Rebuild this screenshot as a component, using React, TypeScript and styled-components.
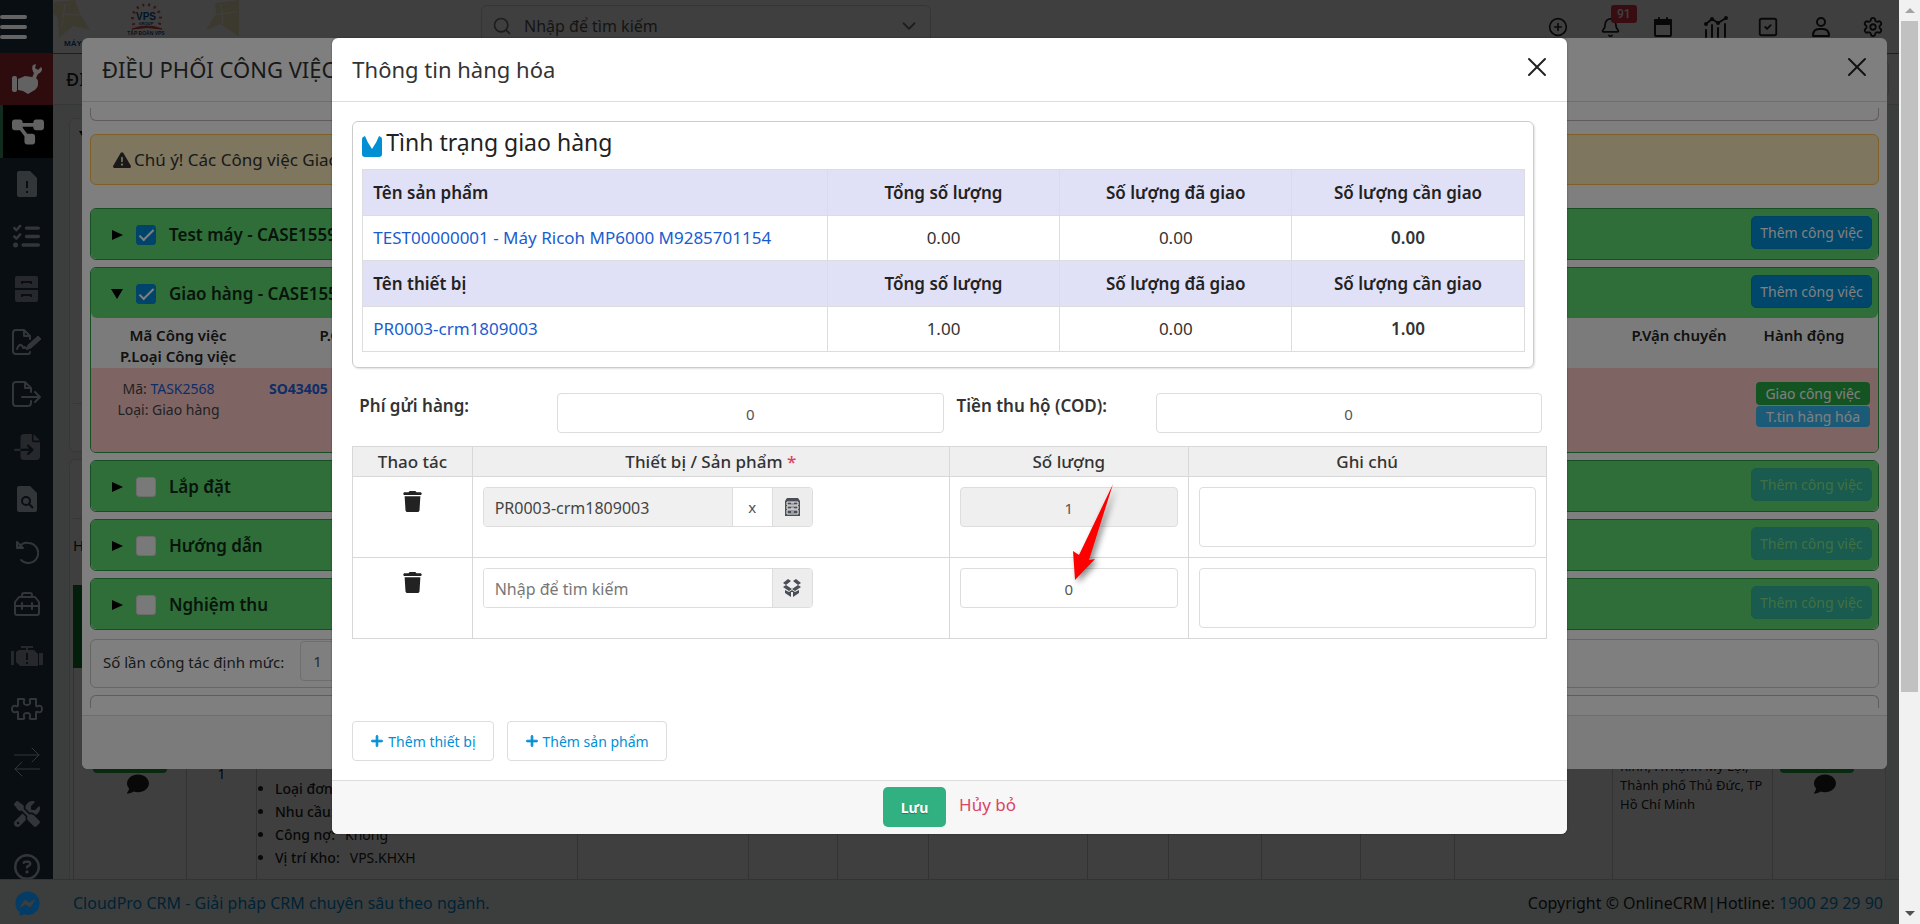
import React from 'react';
import styled, { createGlobalStyle, css } from 'styled-components';
import {
  FaDiagramProject,
  FaListCheck,
  FaFileImport,
  FaScrewdriverWrench,
  FaRegCircleQuestion,
  FaTriangleExclamation,
  FaComment,
  FaTrash,
  FaPlus,
  FaFacebookMessenger,
} from 'react-icons/fa6';
import { CirclePlus, Bell, SquareCheck, Settings, Search, ChevronDown, X } from 'lucide-react';

const GlobalStyle = createGlobalStyle`
  *, *::before, *::after { box-sizing: border-box; }
  html, body { margin: 0; height: 100%; }
  body {
    font-family: 'Noto Sans', 'Open Sans', sans-serif;
    font-size: 15px;
    line-height: 22px;
    color: #222;
    background: #fff;
    overflow: hidden;
  }
  button, input, textarea { font-family: inherit; font-size: inherit; color: inherit; margin: 0; }
  button { cursor: pointer; }
  a { color: #1a5ccf; text-decoration: none; }
  h1, h2, h3, p, ul { margin: 0; padding: 0; font-weight: 400; }
`;

/* ---------- window ---------- */

const Window = styled.div`
  display: flex;
  height: 100vh;
`;

const Stage = styled.div`
  position: relative;
  flex: 1;
  min-width: 0;
  overflow: hidden;
`;

const ScrollTrack = styled.div`
  display: flex;
  flex-direction: column;
  align-items: center;
  width: 21px;
  background: #f1f1f1;
`;

const ScrollThumb = styled.div`
  width: 17px;
  flex: 671 1 0;
  background: #c1c1c1;
`;

const ScrollRest = styled.div`
  flex: 211 1 0;
`;

const ScrollArrow = styled.div<{ $down?: boolean }>`
  display: flex;
  align-items: center;
  justify-content: center;
  height: 21px;
  &::before {
    content: '';
    border: 5px solid transparent;
    ${(p) =>
      p.$down
        ? css`border-top-color: #505050; border-bottom-width: 0;`
        : css`border-bottom-color: #a3a3a3; border-top-width: 0;`}
  }
`;

const Backdrop = styled.div<{ $level: number }>`
  position: absolute;
  inset: 0;
  z-index: ${(p) => p.$level};
  background: rgba(0, 0, 0, 0.5);
`;

/* ---------- page shell ---------- */

const Page = styled.div`
  display: grid;
  grid-template: minmax(0, 1fr) 45px / 53px minmax(0, 1fr);
  height: 100%;
  background: #f2faf7;
`;

const Sidebar = styled.nav`
  position: relative;
  z-index: 2;
  overflow: hidden;
  background: #131c27;
  min-height: 0;
`;

const MenuToggle = styled.button`
  display: flex;
  flex-direction: column;
  justify-content: center;
  gap: 6px;
  width: 53px;
  height: 53px;
  padding: 0;
  border: 0;
  background: transparent;
  span { width: 27px; height: 4px; border-radius: 2px; background: #c8c8c8; }
`;

const SideItem = styled.button<{ $tone?: 'red' | 'active'; $faint?: boolean }>`
  display: flex;
  align-items: center;
  justify-content: center;
  width: 53px;
  height: 52px;
  padding: 0;
  border: 0;
  color: ${(p) => (p.$tone ? '#c4c4c4' : p.$faint ? '#4c5157' : '#676c71')};
  background: ${(p) => (p.$tone === 'red' ? '#5c181b' : p.$tone === 'active' ? '#000' : 'transparent')};
  border-left: ${(p) => (p.$tone === 'active' ? '3px solid #22593f' : '0')};
  &:nth-of-type(odd) { height: 53px; }
`;

const Main = styled.div`
  display: flex;
  flex-direction: column;
  min-width: 0;
  min-height: 0;
  overflow: hidden;
`;

const TopBar = styled.header`
  display: flex;
  justify-content: space-between;
  height: 54px;
  flex: none;
  background: #fff;
  border-bottom: 1px solid #1fa57c;
`;

const SearchBox = styled.div`
  display: flex;
  align-items: center;
  gap: 12px;
  width: 450px;
  height: 42px;
  margin: 5px auto 0 240px;
  padding: 0 10px;
  border: 1px solid #d5d5d5;
  border-radius: 6px;
  color: #777;
  input {
    flex: 1;
    min-width: 0;
    border: 0;
    outline: 0;
    padding: 0;
    background: transparent;
    font-size: 16px;
  }
  input::placeholder { color: #555; opacity: 1; }
`;

const Tools = styled.div`
  display: flex;
  padding: 5px 0 0;
`;

const Tool = styled.button`
  position: relative;
  display: flex;
  align-items: center;
  justify-content: center;
  width: 52px;
  height: 44px;
  padding: 0;
  border: 0;
  color: #222;
  background: transparent;
  &:nth-child(even) { width: 53px; }
`;

const Badge = styled.span`
  position: absolute;
  left: 27px;
  top: 0;
  padding: 0 6px;
  border-radius: 3px;
  background: #dc3545;
  color: #fff;
  font: 500 12px/18px Roboto, sans-serif;
`;

const CrumbBar = styled.div`
  display: flex;
  align-items: center;
  justify-content: space-between;
  height: 51px;
  flex: none;
  padding: 0 10px 0 13px;
  background: #fff;
  border-bottom: 1px solid #ddd;
  h1 { font-size: 18px; font-weight: 500; color: #222; }
`;

const CrumbAction = styled.button`
  width: 120px;
  height: 38px;
  border: 1px solid #ddd;
  border-radius: 6px;
  background: #fff;
`;

const FilterCard = styled.section`
  display: flex;
  flex-direction: column;
  justify-content: space-between;
  flex: none;
  height: 334px;
  margin: 13px 13px 0 16px;
  padding: 11px 8px 47px 3px;
  border: 1px solid #ddd;
  border-radius: 6px;
  background: #fff;
  hr { width: 100%; margin: 0; border: 0; border-top: 1px solid #ddd; }
  button { margin-left: 6px; }
`;

const ListCard = styled.section`
  display: flex;
  flex-direction: column;
  flex: 1;
  margin: 7px 13px 0 16px;
  padding: 58px 0 0 3px;
  border: 1px solid #ddd;
  border-bottom: 0;
  border-radius: 6px 6px 0 0;
  background: #fff;
`;

const ListCaption = styled.p`
  padding: 15px 0 29px;
  border-top: 1px solid #ddd;
`;

const ListHead = styled.div`
  height: 83px;
  background: #0c7a28;
`;

const ListRow = styled.div`
  display: grid;
  grid-template-columns: 113px 70px 321px 171px 89px 91px 159px 81px 93px 99px 94px minmax(0, 1fr) 160px 113px;
  height: 211px;
  flex: none;
`;

const ListCell = styled.div`
  border-left: 1px solid #ccc;
  padding: 91px 7px 0;
  font-size: 14px;
  line-height: 19px;
`;

const AddressCell = styled(ListCell)`
  padding: 89px 0 0 7px;
  font-size: 13px;
`;

const CellActions = styled(ListCell)<{ $inset: number }>`
  display: flex;
  flex-direction: column;
  align-items: flex-start;
  padding: 81px 0 0 ${(p) => p.$inset}px;
  svg { margin-left: 34px; }
`;

const CellButton = styled.button`
  width: 74px;
  height: 24px;
  flex: none;
  border: 0;
  border-radius: 4px;
  background: #28a745;
`;

const CellNumber = styled(ListCell)`
  padding-top: 96px;
  text-align: center;
`;

const InfoList = styled.ul`
  padding: 20px 0 0 11px;
  list-style-position: outside;
  li { padding-bottom: 4px; white-space: nowrap; font-weight: 500; }
  span { font-weight: 400; padding-left: 10px; }
`;

const Footer = styled.footer`
  grid-column: 1 / -1;
  display: flex;
  align-items: center;
  gap: 33px;
  padding: 2px 16px 0 15px;
  border-top: 1px solid #ccc;
  background: #f2faf7;
  font-size: 16px;
  a { color: #0089d0; }
  p { margin-left: auto; }
`;

const Messenger = styled.button`
  position: relative;
  z-index: 2;
  display: flex;
  padding: 0;
  border: 0;
  background: transparent;
  color: #0878cc;
`;

/* ---------- dialogs ---------- */

const Dialog = styled.section`
  display: flex;
  flex-direction: column;
  border-radius: 6px;
  background: #fff;
  overflow: hidden;
`;

const BackDialog = styled(Dialog)`
  position: absolute;
  z-index: 3;
  top: 38px;
  left: 82px;
  right: 12px;
`;

const FrontLayer = styled.div`
  position: absolute;
  z-index: 5;
  inset: 38px 0 0;
  display: flex;
  align-items: flex-start;
  justify-content: center;
`;

const FrontDialog = styled(Dialog)`
  width: 65%;
  box-shadow: 0 0 2px rgba(0, 0, 0, 0.4);
`;

const DialogHead = styled.header`
  display: flex;
  align-items: center;
  justify-content: space-between;
  height: 64px;
  padding: 0 14px 0 20px;
  border-bottom: 1px solid #ddd;
  h2 { padding-bottom: 2px; font-size: 22px; line-height: 30px; color: #333; }
`;

const CloseButton = styled.button`
  display: flex;
  padding: 0 0 6px;
  border: 0;
  background: transparent;
  color: #222;
`;

const DialogFoot = styled.footer`
  display: flex;
  align-items: flex-start;
  justify-content: center;
  gap: 13px;
  height: 54px;
  padding-top: 6px;
  border-top: 1px solid #ddd;
  background: #f7f7f7;
`;

/* ---------- task dialog ---------- */

const TaskBody = styled.div`
  display: flex;
  flex-direction: column;
  gap: 7px;
  margin: 6px 8px 7px;
  overflow: hidden;
`;

const ClippedBox = styled.div<{ $edge: 'top' | 'bottom' }>`
  height: 13px;
  border: 1px solid #c8b4bc;
  ${(p) =>
    p.$edge === 'top'
      ? css`border-top: 0; border-radius: 0 0 6px 6px; margin-bottom: 6px;`
      : css`border-bottom: 0; border-radius: 6px 6px 0 0;`}
`;

const Alert = styled.p`
  display: flex;
  align-items: center;
  gap: 3px;
  height: 51px;
  margin-bottom: 16px;
  padding: 0 22px;
  border: 1px solid #ffc04d;
  border-radius: 6px;
  background: #fcecbc;
  color: #333;
  font-size: 17px;
`;

const StepCard = styled.section`
  border: 1px solid #2e9c45;
  border-radius: 6px;
  background: #f6f6f6;
  overflow: hidden;
`;

const StepHead = styled.div`
  display: flex;
  align-items: center;
  height: 50px;
  padding: 2px 6px 0 20px;
  border-radius: 0 0 6px 6px;
  background: #5edd70;
`;

const Toggle = styled.button<{ $open?: boolean }>`
  display: flex;
  align-items: center;
  justify-content: center;
  width: 12px;
  height: 12px;
  margin-right: 13px;
  padding: 0;
  border: 0;
  background: transparent;
  &::before {
    content: '';
    ${(p) =>
      p.$open
        ? css`border: 6px solid transparent; border-top: 10px solid #000; border-bottom: 0;`
        : css`border: 5px solid transparent; border-left: 11px solid #000; border-right: 0;`}
  }
`;

const StepLabel = styled.label`
  display: flex;
  align-items: center;
  gap: 13px;
  font-size: 17px;
  font-weight: 600;
  color: #112b16;
  white-space: nowrap;
`;

const Check = styled.input`
  appearance: none;
  display: flex;
  align-items: center;
  justify-content: center;
  width: 20px;
  height: 20px;
  border: 1px solid #d8d8d8;
  border-radius: 3px;
  background: #f2f2f2;
  &:checked { background: #0089d8; border-color: #0089d8; }
  &:checked::after {
    content: '';
    width: 7px;
    height: 15px;
    margin-top: -4px;
    border: solid #fff;
    border-width: 0 2px 2px 0;
    transform: rotate(45deg);
  }
`;

const AddTask = styled.button`
  width: 121px;
  height: 33px;
  margin: 0 0 6px auto;
  padding: 0;
  border: 1px solid #0086cc;
  border-radius: 5px;
  background: #008ed6;
  color: #fff;
  font-size: 14px;
  &:disabled { opacity: 0.45; color: #b4e0a0; }
`;

const TaskTable = styled.table`
  width: 100%;
  table-layout: fixed;
  border-collapse: collapse;
  text-align: center;
  th { height: 50px; padding: 7px 0 0; vertical-align: top; font-size: 15px; line-height: 21px; font-weight: 600; }
  td { height: 84px; padding: 10px 0 0; vertical-align: top; background: #ffc8c8; color: #444; font-size: 14px; line-height: 21px; }
  td:first-child { padding-right: 19px; }
  td:nth-child(2) { padding-left: 4px; text-align: left; }
`;

const TaskButton = styled.button<{ $blue?: boolean }>`
  display: block;
  width: 114px;
  height: ${(p) => (p.$blue ? 21 : 23)}px;
  margin: 0 auto 1px;
  padding: 0;
  border: 0;
  border-radius: 4px;
  background: ${(p) => (p.$blue ? '#38b6ee' : '#28a745')};
  color: #fff;
  font-size: 14px;
  line-height: 20px;
`;

const TaskActions = styled.div`
  padding: 4px 0 0 18px;
`;

const QuotaBox = styled.div`
  display: flex;
  align-items: flex-start;
  gap: 16px;
  height: 49px;
  margin-top: 2px;
  padding: 1px 12px;
  border: 1px solid #ccc;
  border-radius: 6px;
  color: #333;
  label { line-height: 42px; }
  input { width: 90px; height: 40px; padding: 0 12px; border: 1px solid #ddd; border-radius: 4px; background: #fff; color: #555; }
`;

/* ---------- goods dialog ---------- */

const GoodsBody = styled.div`
  display: flex;
  flex-direction: column;
  padding: 19px 20px;
`;

const StatusCard = styled.section`
  margin-right: 13px;
  padding: 5px 8px 15px 9px;
  border: 1px solid #ccc;
  border-radius: 6px;
  box-shadow: 1px 1px 2px rgba(0, 0, 0, 0.12);
`;

const StatusTitle = styled.h3`
  display: flex;
  align-items: center;
  gap: 4px;
  height: 30px;
  margin-bottom: 12px;
  font-size: 23px;
  line-height: 30px;
  color: #222;
  svg { margin-top: 8px; }
`;

const StatusTable = styled.table`
  width: 100%;
  table-layout: fixed;
  border-collapse: collapse;
  font-size: 17px;
  th, td { border: 1px solid #ddd; padding: 0 10px; text-align: center; }
  th { height: 46px; background: #e0e0f6; font-weight: 600; }
  td { height: 45px; color: #333; }
  th:first-child, td:first-child { text-align: left; }
  td:last-child { font-weight: 600; }
  th:first-child { width: 40%; }
`;

const FeeRow = styled.div`
  display: grid;
  grid-template-columns: 198px minmax(0, 1fr) 212px minmax(0, 1fr);
  margin: 25px 5px 13px 7px;
  label { padding-top: 2px; font-size: 17px; font-weight: 600; color: #333; }
  label + input + label { padding-left: 13px; }
`;

const Field = styled.input<{ $muted?: boolean }>`
  width: 100%;
  height: 40px;
  padding: 2px 10px 0;
  border: 1px solid #ddd;
  border-radius: 4px;
  background: ${(p) => (p.$muted ? '#efefef' : '#fff')};
  color: #555;
  font-size: 15px;
  text-align: center;
`;

const NoteField = styled.textarea`
  display: block;
  width: 100%;
  height: 60px;
  border: 1px solid #ddd;
  border-radius: 4px;
  resize: none;
`;

const GoodsTable = styled.table`
  width: 100%;
  table-layout: fixed;
  border-collapse: collapse;
  th, td { border: 1px solid #d8d8d8; }
  th { height: 30px; padding: 0; background: #efefef; font-size: 17px; font-weight: 500; color: #333; }
  td { height: 81px; padding: 10px; vertical-align: top; }
  td:first-child { text-align: center; }
  em { color: #e0405f; font-style: normal; }
`;

const TrashButton = styled.button`
  padding: 4px 0;
  border: 0;
  background: transparent;
  color: #222;
`;

const Picker = styled.div`
  display: flex;
  width: 330px;
  height: 40px;
  border: 1px solid #ddd;
  border-radius: 4px;
  overflow: hidden;
  input { flex: 1; min-width: 0; padding: 2px 11px 0; border: 0; outline: 0; font-size: 16px; color: #444; background: #fff; }
  input:read-only { background: #f0f0f0; }
  input::placeholder { color: #777; opacity: 1; }
`;

const PickerButton = styled.button<{ $plain?: boolean }>`
  display: flex;
  align-items: center;
  justify-content: center;
  width: 40px;
  padding: 0;
  border: 0;
  border-left: 1px solid #ddd;
  background: ${(p) => (p.$plain ? '#fff' : '#ededed')};
  color: #4a4f57;
`;

const QuantityCell = styled.td`
  position: relative;
`;

const Pointer = styled.svg`
  position: absolute;
  z-index: 1;
  left: 116px;
  top: 4px;
  filter: drop-shadow(3px 3px 3px rgba(0, 0, 0, 0.45));
  pointer-events: none;
`;

const AddRow = styled.div`
  display: flex;
  gap: 13px;
  margin-top: 82px;
`;

const AddButton = styled.button`
  display: flex;
  align-items: center;
  gap: 4px;
  height: 40px;
  padding: 0 17px;
  border: 1px solid #ddd;
  border-radius: 4px;
  background: #fff;
  color: #008fd6;
  font-size: 14px;
  svg { stroke: currentColor; stroke-width: 30px; }
`;

const SaveButton = styled.button`
  width: 63px;
  height: 40px;
  padding: 0;
  border: 0;
  border-radius: 5px;
  background: #31b082;
  color: #fff;
  font-size: 14px;
  font-weight: 700;
  text-shadow: 0 1px 1px rgba(0, 0, 0, 0.3);
`;

const CancelLink = styled.a`
  padding-top: 7px;
  color: #dc4462;
  font-size: 17px;
`;

/* ---------- drawings ---------- */

const outline = { fill: 'none', stroke: 'currentColor', strokeWidth: 2, strokeLinecap: 'round', strokeLinejoin: 'round' } as const;

const HandWrench = () => (
  <svg width="32" height="32" viewBox="0 0 32 32" fill="currentColor">
    <rect x="1" y="13" width="5" height="16" rx="2" />
    <path d="M7 16 14 13 21 14Q26 14 27 18L27 22Q26 26 22 28L17 31 12 28 7 27Z" />
    <path d="M21 15 23 10Q20 6 22 2L25 1 24 5 27 7 30 4Q33 8 27 11L25 15Z" />
  </svg>
);

const FileAlert = () => (
  <svg width="20" height="26" viewBox="0 0 20 26">
    <path d="M2 0H13L20 7V24Q20 26 18 26H2Q0 26 0 24V2Q0 0 2 0Z" fill="currentColor" />
    <path d="M10 10V17M10 20V22" stroke="#131c27" strokeWidth="2" />
  </svg>
);

const Cabinet = () => (
  <svg width="23" height="26" viewBox="0 0 23 26">
    <path d="M2 0H21Q23 0 23 2V12H0V2Q0 0 2 0ZM0 14H23V24Q23 26 21 26H2Q0 26 0 24Z" fill="currentColor" />
    <path d="M7 8V6H16V8M7 21V19H16V21" fill="none" stroke="#131c27" strokeWidth="2" />
  </svg>
);

const FileSign = () => (
  <svg width="30" height="26" viewBox="0 0 30 26" {...outline}>
    <path d="M18 23Q18 25 16 25H4Q1 25 1 22V4Q1 1 4 1H12L18 7V10M12 1V7H18M5 20Q7 15 9 16T11 19L13 18 15 20" />
    <path d="M15 20 16 16 26 7 29 10 19 19Z" fill="currentColor" strokeWidth="1" />
  </svg>
);

const FileOut = () => (
  <svg width="30" height="26" viewBox="0 0 30 26" {...outline}>
    <path d="M19 11V7L13 1H4Q1 1 1 4V22Q1 25 4 25H16Q19 25 19 22V20M13 1V7H19M10 16H28M23 11 28 16 23 21" />
  </svg>
);

const FileSearch = () => (
  <svg width="20" height="26" viewBox="0 0 20 26">
    <path d="M2 0H13L20 7V24Q20 26 18 26H2Q0 26 0 24V2Q0 0 2 0Z" fill="currentColor" />
    <circle cx="9" cy="15" r="4" fill="none" stroke="#131c27" strokeWidth="2" />
    <path d="M12 18 16 22" stroke="#131c27" strokeWidth="2" />
  </svg>
);

const Undo = () => (
  <svg width="24" height="24" viewBox="0 0 24 24" {...outline}>
    <path d="M2 2V8H8ZM4 7Q8 2 13 3A10 10 0 1 1 6 20" />
  </svg>
);

const Toolbox = () => (
  <svg width="26" height="24" viewBox="0 0 26 24" {...outline}>
    <path d="M8 5V3Q8 1 10 1H16Q18 1 18 3V5M1 14V10L5 5H21L25 10V21Q25 23 23 23H3Q1 23 1 21ZM1 14H25M8 11V17M18 11V17" />
  </svg>
);

const Engine = () => (
  <svg width="32" height="24" viewBox="0 0 32 24">
    <path d="M10 1H22V3H17V5H23L27 9V21H9L5 17V7L8 5H15V3H10ZM0 6H3V20H0ZM28 8H32V20H28Z" fill="currentColor" />
    <path d="M16 8V15M16 17V19" stroke="#131c27" strokeWidth="2" />
  </svg>
);

const Puzzle = () => (
  <svg width="32" height="24" viewBox="0 0 32 24" {...outline}>
    <path d="M7 2H12Q14 2 13 4Q12 8 16 8Q20 8 19 4Q18 2 20 2H25V8Q25 10 27 9Q31 8 31 12T27 15Q25 14 25 16V22H20Q18 22 19 20Q20 16 16 16T13 20Q14 22 12 22H7V16Q7 14 5 15Q1 16 1 12T5 9Q7 10 7 8Z" />
  </svg>
);

const Swap = () => (
  <svg width="26" height="30" viewBox="0 0 26 30" {...outline} strokeWidth={1}>
    <path d="M0 8H25M18 1 25 8 18 15M26 22H1M8 15 1 22 8 29" />
  </svg>
);

const CalendarIcon = () => (
  <svg width="18" height="20" viewBox="0 0 18 20" {...outline}>
    <path d="M1 4Q1 3 2 3H16Q17 3 17 4V18Q17 19 16 19H2Q1 19 1 18ZM5 1V4M13 1V4" />
    <path d="M1 3H17V7H1Z" fill="currentColor" />
  </svg>
);

const ChartIcon = () => (
  <svg width="24" height="22" viewBox="0 0 24 22" {...outline}>
    <path d="M2 8 8 3 14 7 22 2M2 14V21M8 9V21M14 12V21M21 8V21" />
    <circle cx="2" cy="8" r="1" /><circle cx="8" cy="3" r="1" /><circle cx="14" cy="7" r="1" /><circle cx="22" cy="2" r="1" />
  </svg>
);

const UserIcon = () => (
  <svg width="18" height="20" viewBox="0 0 18 20" {...outline}>
    <circle cx="9" cy="5" r="4" />
    <path d="M1 19Q1 12 7 12H11Q17 12 17 19Z" />
  </svg>
);

const BuildingIcon = () => (
  <svg width="15" height="18" viewBox="0 0 15 18">
    <path d="M2 0H13L15 3V18H0V3Z" fill="currentColor" />
    <path d="M2 4H13V7H2ZM2 8H13V11H2ZM2 12H13V16H2Z" fill="none" stroke="#ededed" strokeWidth="1" />
    <path d="M6 5H9M6 10H9M6 14H9" stroke="#ededed" strokeWidth="1" />
  </svg>
);

const OpenBoxIcon = () => (
  <svg width="18" height="18" viewBox="0 0 18 18" fill="currentColor">
    <path d="M5 0 8 2 3 6 0 4ZM13 0 18 4 15 6 10 2Z" />
    <path d="M0 8 3 6 9 10 15 6 18 8 12 12 9 10 6 12ZM2 11 6 13 9 11 12 13 16 11V14L10 18V13H8V18L2 14Z" />
  </svg>
);

const BrandMark = () => (
  <svg width="20" height="21" viewBox="0 0 20 21">
    <path d="M0 3Q0 1 3 0Q5 6 10 13Q15 6 17 0Q20 1 20 3V18Q20 21 17 21H3Q0 21 0 18Z" fill="#008fd3" />
  </svg>
);

const CompanyLogo = () => (
  <svg width="188" height="52" viewBox="0 0 188 52" role="img" aria-label="VPS Group">
    <g fill="#f3e6bf">
      <path d="M1 2 22 0 27 14 37 30 20 26 6 38 5 18 0 13Z" />
      <path d="M186 0 162 3 163 14 153 30 168 24 186 37Z" />
    </g>
    <path d="M8 14 26 15M12 4 9 26M168 4 170 24M160 15 184 12" stroke="#fff" strokeWidth="1" />
    <path d="M81 25A14 14 0 1 1 106 25" fill="none" stroke="#e05050" strokeWidth="3" strokeDasharray="2 4" />
    <path d="M79 29Q94 23 109 29Q94 26 79 29Z" fill="#d33" stroke="#d33" />
    <g fill="#0a5296" fontFamily="'Liberation Sans', sans-serif" fontWeight="700" textAnchor="middle">
      <text x="93" y="20" fontSize="10">VPS</text>
      <text x="93" y="25" fontSize="4">GROUP</text>
      <text x="93" y="35" fontSize="5">TẬP ĐOÀN VPS</text>
      <text x="20" y="46" fontSize="8">MÁY</text>
    </g>
  </svg>
);

/* ---------- data ---------- */

const sideItems: { name: string; icon: React.ReactNode; tone?: 'red' | 'active'; faint?: boolean }[] = [
  { name: 'Dịch vụ', icon: <HandWrench />, tone: 'red' },
  { name: 'Điều phối', icon: <FaDiagramProject size={32} />, tone: 'active' },
  { name: 'Phiếu', icon: <FileAlert /> },
  { name: 'Danh sách', icon: <FaListCheck size={27} /> },
  { name: 'Lưu trữ', icon: <Cabinet />, faint: true },
  { name: 'Ký', icon: <FileSign /> },
  { name: 'Xuất', icon: <FileOut /> },
  { name: 'Nhập', icon: <FaFileImport size={26} />, faint: true },
  { name: 'Tra cứu', icon: <FileSearch /> },
  { name: 'Hoàn tác', icon: <Undo /> },
  { name: 'Dụng cụ', icon: <Toolbox /> },
  { name: 'Máy', icon: <Engine />, faint: true },
  { name: 'Linh kiện', icon: <Puzzle /> },
  { name: 'Chuyển đổi', icon: <Swap /> },
  { name: 'Sửa chữa', icon: <FaScrewdriverWrench size={26} /> },
  { name: 'Trợ giúp', icon: <FaRegCircleQuestion size={26} /> },
];

const steps = [
  { id: 'test', label: 'Test máy - CASE1559', checked: true },
  { id: 'ship', label: 'Giao hàng - CASE1559', checked: true, open: true },
  { id: 'install', label: 'Lắp đặt' },
  { id: 'guide', label: 'Hướng dẫn' },
  { id: 'accept', label: 'Nghiệm thu' },
];

const statusGroups = [
  { head: 'Tên sản phẩm', name: 'TEST00000001 - Máy Ricoh MP6000 M9285701154', total: '0.00', done: '0.00', left: '0.00' },
  { head: 'Tên thiết bị', name: 'PR0003-crm1809003', total: '1.00', done: '0.00', left: '1.00' },
];

const info = [
  ['Loại đơn:', ''],
  ['Nhu cầu:', ''],
  ['Công nợ:', 'Không'],
  ['Vị trí Kho:', 'VPS.KHXH'],
];

const Shipments = () => (
  <TaskTable>
    <colgroup>
      <col style={{ width: 174 }} />
      <col style={{ width: 194 }} />
      <col />
      <col style={{ width: 102 }} />
      <col style={{ width: 148 }} />
    </colgroup>
    <thead>
      <tr>
        <th scope="col">Mã Công việc<br />P.Loại Công việc</th>
        <th scope="col">P.Giao hàng</th>
        <th />
        <th scope="col">P.Vận chuyển</th>
        <th scope="col">Hành động</th>
      </tr>
    </thead>
    <tbody>
      <tr>
        <td>Mã: <a href="#task">TASK2568</a><br />Loại: Giao hàng</td>
        <td><a href="#order"><b>SO43405</b></a></td>
        <td />
        <td />
        <td>
          <TaskActions>
            <TaskButton>Giao công việc</TaskButton>
            <TaskButton $blue>T.tin hàng hóa</TaskButton>
          </TaskActions>
        </td>
      </tr>
    </tbody>
  </TaskTable>
);

export default function App() {
  return (
    <Window>
      <GlobalStyle />
      <Stage>
        <Page>
          <Sidebar>
            <MenuToggle aria-label="Menu"><span /><span /><span /></MenuToggle>
            {sideItems.map((item) => (
              <SideItem key={item.name} aria-label={item.name} $tone={item.tone} $faint={item.faint}>{item.icon}</SideItem>
            ))}
          </Sidebar>
          <Main>
            <TopBar>
              <CompanyLogo />
              <SearchBox>
                <Search size={20} strokeWidth={2} />
                <input aria-label="Tìm kiếm" placeholder="Nhập để tìm kiếm" />
                <ChevronDown size={22} />
              </SearchBox>
              <Tools>
                <Tool aria-label="Thêm"><CirclePlus size={20} /></Tool>
                <Tool aria-label="Thông báo"><Bell size={21} /><Badge>91</Badge></Tool>
                <Tool aria-label="Lịch"><CalendarIcon /></Tool>
                <Tool aria-label="Báo cáo"><ChartIcon /></Tool>
                <Tool aria-label="Công việc"><SquareCheck size={22} /></Tool>
                <Tool aria-label="Tài khoản"><UserIcon /></Tool>
                <Tool aria-label="Cài đặt"><Settings size={22} /></Tool>
              </Tools>
            </TopBar>
            <CrumbBar>
              <h1>ĐI</h1>
              <CrumbAction aria-label="Tác vụ" />
            </CrumbBar>
            <FilterCard><Toggle $open aria-label="Bộ lọc" /><hr /></FilterCard>
            <ListCard>
              <ListCaption>H</ListCaption>
              <ListHead />
              <ListRow>
                <CellActions $inset={19}>
                  <CellButton aria-label="Xem" />
                  <FaComment size={22} />
                </CellActions>
                <CellNumber>1</CellNumber>
                <ListCell>
                  <InfoList>
                    {info.map(([k, v]) => <li key={k}>{k}<span>{v}</span></li>)}
                  </InfoList>
                </ListCell>
                {['a', 'b', 'c', 'd', 'e', 'f', 'g', 'h', 'i'].map((k) => <ListCell key={k} />)}
                <AddressCell>Kinh, P.Thạnh Mỹ Lợi, Thành phố Thủ Đức, TP Hồ Chí Minh</AddressCell>
                <CellActions $inset={7}>
                  <CellButton aria-label="Xem" />
                  <FaComment size={22} />
                </CellActions>
              </ListRow>
            </ListCard>
          </Main>
          <Footer>
            <Messenger aria-label="Messenger"><FaFacebookMessenger size={25} /></Messenger>
            <a href="#cloudpro">CloudPro CRM - Giải pháp CRM chuyên sâu theo ngành.</a>
            <p>Copyright © OnlineCRM|Hotline: <a href="#hotline">1900 29 29 90</a></p>
          </Footer>
        </Page>

        <Backdrop $level={1} />

        <BackDialog role="dialog" aria-label="Điều phối công việc">
          <DialogHead>
            <h2>ĐIỀU PHỐI CÔNG VIỆC</h2>
            <CloseButton aria-label="Đóng"><X size={32} strokeWidth={1.5} /></CloseButton>
          </DialogHead>
          <TaskBody>
            <ClippedBox $edge="top" />
            <Alert><FaTriangleExclamation size={18} />Chú ý! Các Công việc Giao</Alert>
            {steps.map((s) => (
              <StepCard key={s.id}>
                <StepHead>
                  <Toggle $open={s.open} aria-label={s.label} />
                  <StepLabel><Check type="checkbox" defaultChecked={s.checked} />{s.label}</StepLabel>
                  <AddTask disabled={!s.checked}>Thêm công việc</AddTask>
                </StepHead>
                {s.open && <Shipments />}
              </StepCard>
            ))}
            <QuotaBox>
              <label htmlFor="quota">Số lần công tác định mức:</label>
              <input id="quota" defaultValue="1" />
            </QuotaBox>
            <ClippedBox $edge="bottom" />
          </TaskBody>
          <DialogFoot />
        </BackDialog>

        <Backdrop $level={4} />

        <FrontLayer>
          <FrontDialog role="dialog" aria-label="Thông tin hàng hóa">
            <DialogHead>
              <h2>Thông tin hàng hóa</h2>
              <CloseButton aria-label="Đóng"><X size={32} strokeWidth={1.5} /></CloseButton>
            </DialogHead>
            <GoodsBody>
              <StatusCard>
                <StatusTitle><BrandMark />Tình trạng giao hàng</StatusTitle>
                <StatusTable>
                  <tbody>
                    {statusGroups.map((g) => (
                      <React.Fragment key={g.head}>
                        <tr>
                          <th scope="col">{g.head}</th>
                          <th scope="col">Tổng số lượng</th>
                          <th scope="col">Số lượng đã giao</th>
                          <th scope="col">Số lượng cần giao</th>
                        </tr>
                        <tr>
                          <td><a href="#item">{g.name}</a></td>
                          <td>{g.total}</td>
                          <td>{g.done}</td>
                          <td>{g.left}</td>
                        </tr>
                      </React.Fragment>
                    ))}
                  </tbody>
                </StatusTable>
              </StatusCard>
              <FeeRow>
                <label htmlFor="fee">Phí gửi hàng:</label>
                <Field id="fee" defaultValue="0" />
                <label htmlFor="cod">Tiền thu hộ (COD):</label>
                <Field id="cod" defaultValue="0" />
              </FeeRow>
              <GoodsTable>
                <colgroup>
                  <col style={{ width: '10%' }} />
                  <col style={{ width: '40%' }} />
                  <col style={{ width: '20%' }} />
                  <col style={{ width: '30%' }} />
                </colgroup>
                <thead>
                  <tr>
                    <th scope="col">Thao tác</th>
                    <th scope="col">Thiết bị / Sản phẩm <em>*</em></th>
                    <th scope="col">Số lượng</th>
                    <th scope="col">Ghi chú</th>
                  </tr>
                </thead>
                <tbody>
                  <tr>
                    <td><TrashButton aria-label="Xóa"><FaTrash size={21} /></TrashButton></td>
                    <td>
                      <Picker>
                        <input aria-label="Thiết bị" readOnly value="PR0003-crm1809003" />
                        <PickerButton $plain aria-label="Bỏ chọn">x</PickerButton>
                        <PickerButton aria-label="Chọn thiết bị"><BuildingIcon /></PickerButton>
                      </Picker>
                    </td>
                    <QuantityCell>
                      <Field $muted readOnly aria-label="Số lượng" value="1" />
                      <Pointer width="48" height="104" viewBox="0 0 48 104" aria-hidden="true">
                        <path d="M47 3 23 79 29 78 9 99 7 70 13 74Z" fill="#f00" />
                      </Pointer>
                    </QuantityCell>
                    <td><NoteField aria-label="Ghi chú" /></td>
                  </tr>
                  <tr>
                    <td><TrashButton aria-label="Xóa"><FaTrash size={21} /></TrashButton></td>
                    <td>
                      <Picker>
                        <input aria-label="Sản phẩm" placeholder="Nhập để tìm kiếm" />
                        <PickerButton aria-label="Chọn sản phẩm"><OpenBoxIcon /></PickerButton>
                      </Picker>
                    </td>
                    <td><Field aria-label="Số lượng" defaultValue="0" /></td>
                    <td><NoteField aria-label="Ghi chú" /></td>
                  </tr>
                </tbody>
              </GoodsTable>
              <AddRow>
                <AddButton><FaPlus size={14} />Thêm thiết bị</AddButton>
                <AddButton><FaPlus size={14} />Thêm sản phẩm</AddButton>
              </AddRow>
            </GoodsBody>
            <DialogFoot>
              <SaveButton>Lưu</SaveButton>
              <CancelLink href="#cancel">Hủy bỏ</CancelLink>
            </DialogFoot>
          </FrontDialog>
        </FrontLayer>
      </Stage>
      <ScrollTrack aria-hidden="true">
        <ScrollArrow />
        <ScrollThumb />
        <ScrollRest />
        <ScrollArrow $down />
      </ScrollTrack>
    </Window>
  );
}
